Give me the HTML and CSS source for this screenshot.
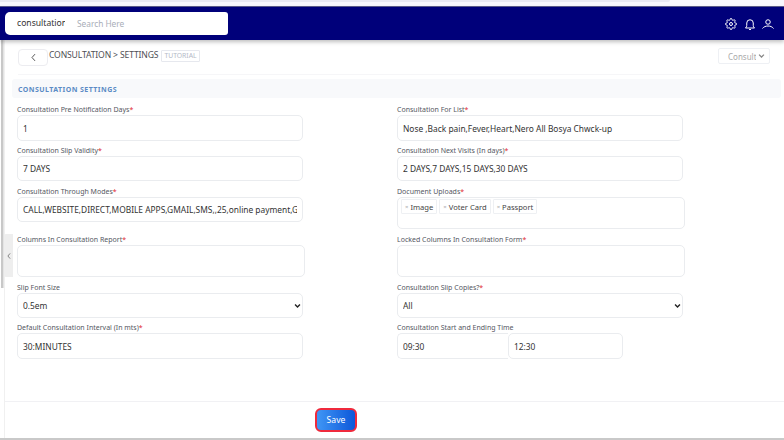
FILE: index.html
```html
<!DOCTYPE html>
<html lang="en">
<head>
<meta charset="utf-8">
<title>Consultation Settings</title>
<link rel="stylesheet" href="styles.css">
</head>
<body>
<div class="topstrip"><div class="urlbar"></div></div>
<header class="navbar">
  <div class="search">
    <div class="search-module">consultation</div>
    <div class="search-text">Search Here</div>
  </div>
  <div class="nav-icons">
    <svg class="nav-icon" viewBox="0 0 24 24" fill="none" stroke="#fff" stroke-width="2"><circle cx="12" cy="12" r="3"/><path d="M19.4 15a1.65 1.65 0 0 0 .33 1.82l.06.06a2 2 0 0 1 0 2.83 2 2 0 0 1-2.83 0l-.06-.06a1.65 1.65 0 0 0-1.82-.33 1.65 1.65 0 0 0-1 1.51V21a2 2 0 0 1-2 2 2 2 0 0 1-2-2v-.09A1.65 1.65 0 0 0 9 19.4a1.65 1.65 0 0 0-1.82.33l-.06.06a2 2 0 0 1-2.83 0 2 2 0 0 1 0-2.83l.06-.06a1.65 1.65 0 0 0 .33-1.82 1.65 1.65 0 0 0-1.51-1H3a2 2 0 0 1-2-2 2 2 0 0 1 2-2h.09A1.65 1.65 0 0 0 4.6 9a1.65 1.65 0 0 0-.33-1.82l-.06-.06a2 2 0 0 1 0-2.83 2 2 0 0 1 2.83 0l.06.06a1.65 1.65 0 0 0 1.82.33H9a1.65 1.65 0 0 0 1-1.51V3a2 2 0 0 1 2-2 2 2 0 0 1 2 2v.09a1.65 1.65 0 0 0 1 1.51 1.65 1.65 0 0 0 1.82-.33l.06-.06a2 2 0 0 1 2.83 0 2 2 0 0 1 0 2.83l-.06.06a1.65 1.65 0 0 0-.33 1.82V9a1.65 1.65 0 0 0 1.51 1H21a2 2 0 0 1 2 2 2 2 0 0 1-2 2h-.09a1.65 1.65 0 0 0-1.51 1z"/></svg>
    <svg class="nav-icon" viewBox="0 0 24 24" fill="none" stroke="#fff" stroke-width="2"><path d="M3 20c1.800-1.500 2.500-3 2.500-5v-5a6.500 6.500 0 0 1 13 0v5c0 2 .7 3.500 2.500 5z"/><path d="M10 23h4"/></svg>
    <svg class="nav-icon" viewBox="0 0 24 24" fill="none" stroke="#fff" stroke-width="2"><circle cx="12" cy="8" r="4.500"/><path d="M1 21c2.500-3.500 6.500-5 11-5s8.500 1.500 11 5"/></svg>
  </div>
</header>
<div class="page">
  <div class="rail"></div>
  <button class="collapse" type="button" aria-label="Collapse">
    <svg viewBox="0 0 8 10" fill="none" stroke="#777" stroke-width="1.200"><path d="M5.500 1.500L2.500 5l3 3.500"/></svg>
  </button>
  <main class="content">
    <div class="crumbs">
      <button class="back" type="button" aria-label="Back">
        <svg viewBox="0 0 8 12" fill="none" stroke="#444" stroke-width="1.200"><path d="M6 1.500L2 6l4 4.500"/></svg>
      </button>
      <span class="crumb-text">CONSULTATION &gt; SETTINGS</span>
      <span class="tutorial">TUTORIAL</span>
      <div class="crumb-select"><span class="crumb-value">Consultation</span><svg viewBox="0 0 10 8" fill="none" stroke="#888" stroke-width="1.800"><path d="M1.500 2l3.500 3.500L8.500 2"/></svg></div>
    </div>
    <h2 class="section-title">CONSULTATION SETTINGS</h2>
    <form class="form">
      <div class="col col-left">
        <div class="field"><label>Consultation Pre Notification Days<b>*</b></label><input class="ctl h26" value="1"></div>
        <div class="field gap4"><label>Consultation Slip Validity<b>*</b></label><input class="ctl h25" value="7 DAYS"></div>
        <div class="field gap5"><label>Consultation Through Modes<b>*</b></label><input class="ctl h25" value="CALL,WEBSITE,DIRECT,MOBILE APPS,GMAIL,SMS,,25,online payment,Gupshup"></div>
        <div class="field gap12"><label>Columns In Consultation Report<b>*</b></label><div class="ctl h32 wide"></div></div>
        <div class="field gap5"><label>Slip Font Size</label><select class="ctl h25 sel"><option>0.5em</option></select></div>
        <div class="field gap4"><label>Default Consultation Interval (In mts)<b>*</b></label><input class="ctl h26" value="30:MINUTES"></div>
      </div>
      <div class="col col-right">
        <div class="field"><label>Consultation For List<b>*</b></label><input class="ctl h26" value="Nose ,Back pain,Fever,Heart,Nero All Bosya Chwck-up"></div>
        <div class="field gap4"><label>Consultation Next Visits (In days)<b>*</b></label><input class="ctl h25" value="2 DAYS,7 DAYS,15 DAYS,30 DAYS"></div>
        <div class="field gap5"><label>Document Uploads<b>*</b></label>
          <div class="ctl tags wide">
            <span class="tag"><i>×</i>Image</span><span class="tag"><i>×</i>Voter Card</span><span class="tag"><i>×</i>Passport</span>
          </div>
        </div>
        <div class="field gap5"><label>Locked Columns In Consultation Form<b>*</b></label><div class="ctl h32 wide"></div></div>
        <div class="field gap5"><label>Consultation Slip Copies?<b>*</b></label><select class="ctl h25 sel"><option>All</option></select></div>
        <div class="field gap4"><label>Consultation Start and Ending Time</label>
          <div class="times"><input class="ctl h26 t1" value="09:30"><input class="ctl h26 t2" value="12:30"></div>
        </div>
      </div>
    </form>
    <footer class="footer"><button class="save" type="button">Save</button></footer>
  </main>
</div>
<div class="bottomstrip"></div>
</body>
</html>
```
FILE: styles.css
```css
* { box-sizing: border-box; }
html, body { margin: 0; height: 440px; overflow: hidden; }
body { background: #fff; font-family: "Noto Sans", "Open Sans", sans-serif; color: #333; display: flex; flex-direction: column; }
.topstrip { height: 7px; background: #f8f7fe; border-bottom: 1px solid #5b5b8c; flex: none; }
.urlbar { width: 670px; height: 2px; background: #e9e9f4; border-radius: 0 0 6px 0; }
.navbar { height: 33px; flex: none; background: #00007a; display: flex; align-items: center; justify-content: space-between; padding: 0 10px 0 5px; box-shadow: 0 2px 4px rgba(0,0,0,.25); position: relative; z-index: 2; }
.search { width: 223px; height: 23px; margin-top: -1px; background: #fff; border-radius: 5px 3px 3px 5px; display: flex; align-items: center; font-size: 8.600px; }
.search-module { width: 48px; margin-left: 12px; overflow: hidden; white-space: nowrap; color: #333; flex: none; }
.search-text { margin-left: 12px; color: #a9aeb8; font-size: 8.300px; }
.nav-icons { display: flex; gap: 6.500px; align-items: center; margin-top: 1px; }
.nav-icon { width: 12px; height: 12px; display: block; }
.page { flex: 1; min-height: 0; display: flex; position: relative; }
.rail { width: 4px; flex: none; height: 248px; background: #c8c8c8; border-right: 1px solid #e4e4e4; border-left: 1px solid #fff; }
.collapse { position: absolute; left: 4px; top: 194px; width: 9px; height: 43px; padding: 0; border: 0; background: #eeeeee; display: flex; align-items: center; justify-content: center; border-radius: 2px 0 0 2px; }
.collapse svg { width: 6px; height: 8px; }
.content { flex: 1; min-width: 0; display: flex; flex-direction: column; border-left: 1px solid #f0f0f0; }
.crumbs { height: 35px; margin: 0 14px 4px 13px; display: flex; align-items: flex-start; border-bottom: 1px solid #f6f6f8; padding-top: 8px; font-size: 8.600px; flex: none; }
.back { width: 30px; height: 17px; padding: 0; background: #fff; border: 1px solid #ececf0; border-radius: 4px; display: flex; align-items: center; justify-content: center; flex: none; margin-top: 1px; }
.back svg { width: 7px; height: 9px; }
.crumb-text { margin-left: 1px; color: #4f4f55; line-height: 15px; white-space: nowrap; letter-spacing: -.15px; }
.tutorial { margin-left: 3px; height: 12px; margin-top: 2px; padding: 0 2px; border: 1px solid #e6e8ee; font-size: 6.800px; line-height: 10px; color: #b4bac7; white-space: nowrap; border-radius: 1px; }
.crumb-select { margin-left: auto; width: 52px; height: 16px; border: 1px solid #eef0f4; border-radius: 2px; display: flex; align-items: center; justify-content: space-between; padding: 0 4px 0 9px; font-size: 8px; color: #aaa; overflow: hidden; }
.crumb-value { width: 28px; overflow: hidden; white-space: nowrap; }
.crumb-select svg { width: 7px; height: 6px; flex: none; }
.section-title { margin: 0 3px 0 7px; height: 19px; padding: 0 6px; background: #f8f9fb; border-radius: 3px; font-size: 7px; line-height: 21px; font-weight: 700; letter-spacing: .45px; color: #5b8bc5; flex: none; }
.form { display: flex; flex: none; height: 304px; padding-top: 6px; border-bottom: 1px solid #f1f1f4; align-items: flex-start; }
.col { display: flex; flex-direction: column; flex: none; }
.col-left { width: 392px; padding-left: 12px; }
.col-right { width: 300px; }
.field { display: flex; flex-direction: column; }
.field label { font-size: 7px; line-height: 11px; height: 11px; color: #55585f; white-space: nowrap; }
.field label b { color: #e01f2f; font-weight: 400; }
.gap4 { margin-top: 4px; }
.gap5 { margin-top: 5px; }
.gap12 { margin-top: 12px; }
.ctl { width: 286px; background: #fff; border: 1px solid #eaecef; border-radius: 5px; font-family: inherit; font-size: 8.400px; color: #333; padding: 0 5px; outline: 0; margin: 0; display: block; }
.h26 { height: 26px; }
.h25 { height: 25px; }
.h32 { height: 32px; }
.wide { width: 288px; }
.sel { padding: 0 5px; appearance: none; background: #fff url("data:image/svg+xml,%3Csvg xmlns='http://www.w3.org/2000/svg' viewBox='0 0 10 8'%3E%3Cpath d='M1.500 2l3.500 3.500L8.500 2' fill='none' stroke='%23222' stroke-width='2'/%3E%3C/svg%3E") no-repeat right 1px center / 7px 6px; }
.tags { height: 32px; padding: 1px 3px; display: flex; align-items: flex-start; gap: 2px; }
.tag { height: 15px; display: inline-flex; align-items: center; background: #fff; border: 1px solid #eef0f3; font-size: 7.600px; color: #444; padding: 0 3px; border-radius: 1px; white-space: nowrap; }
.tag i { font-style: normal; font-size: 6px; color: #aaa; margin-right: 2px; }
.times { display: flex; }
.ctl.t1 { width: 111px; border-right: 0; border-radius: 5px 0 0 5px; }
.ctl.t2 { width: 115px; border-radius: 5px; }
.footer { flex: none; display: flex; padding: 6px 0 0 310px; }
.save { width: 42px; height: 24px; padding: 0; border: 2px solid #ef2a3c; border-radius: 6px; background: linear-gradient(90deg, #3f96f5, #0d57d9); color: #fff; font-family: inherit; font-size: 8.600px; }
.bottomstrip { height: 2px; flex: none; background: #c9c9c9; }
```
